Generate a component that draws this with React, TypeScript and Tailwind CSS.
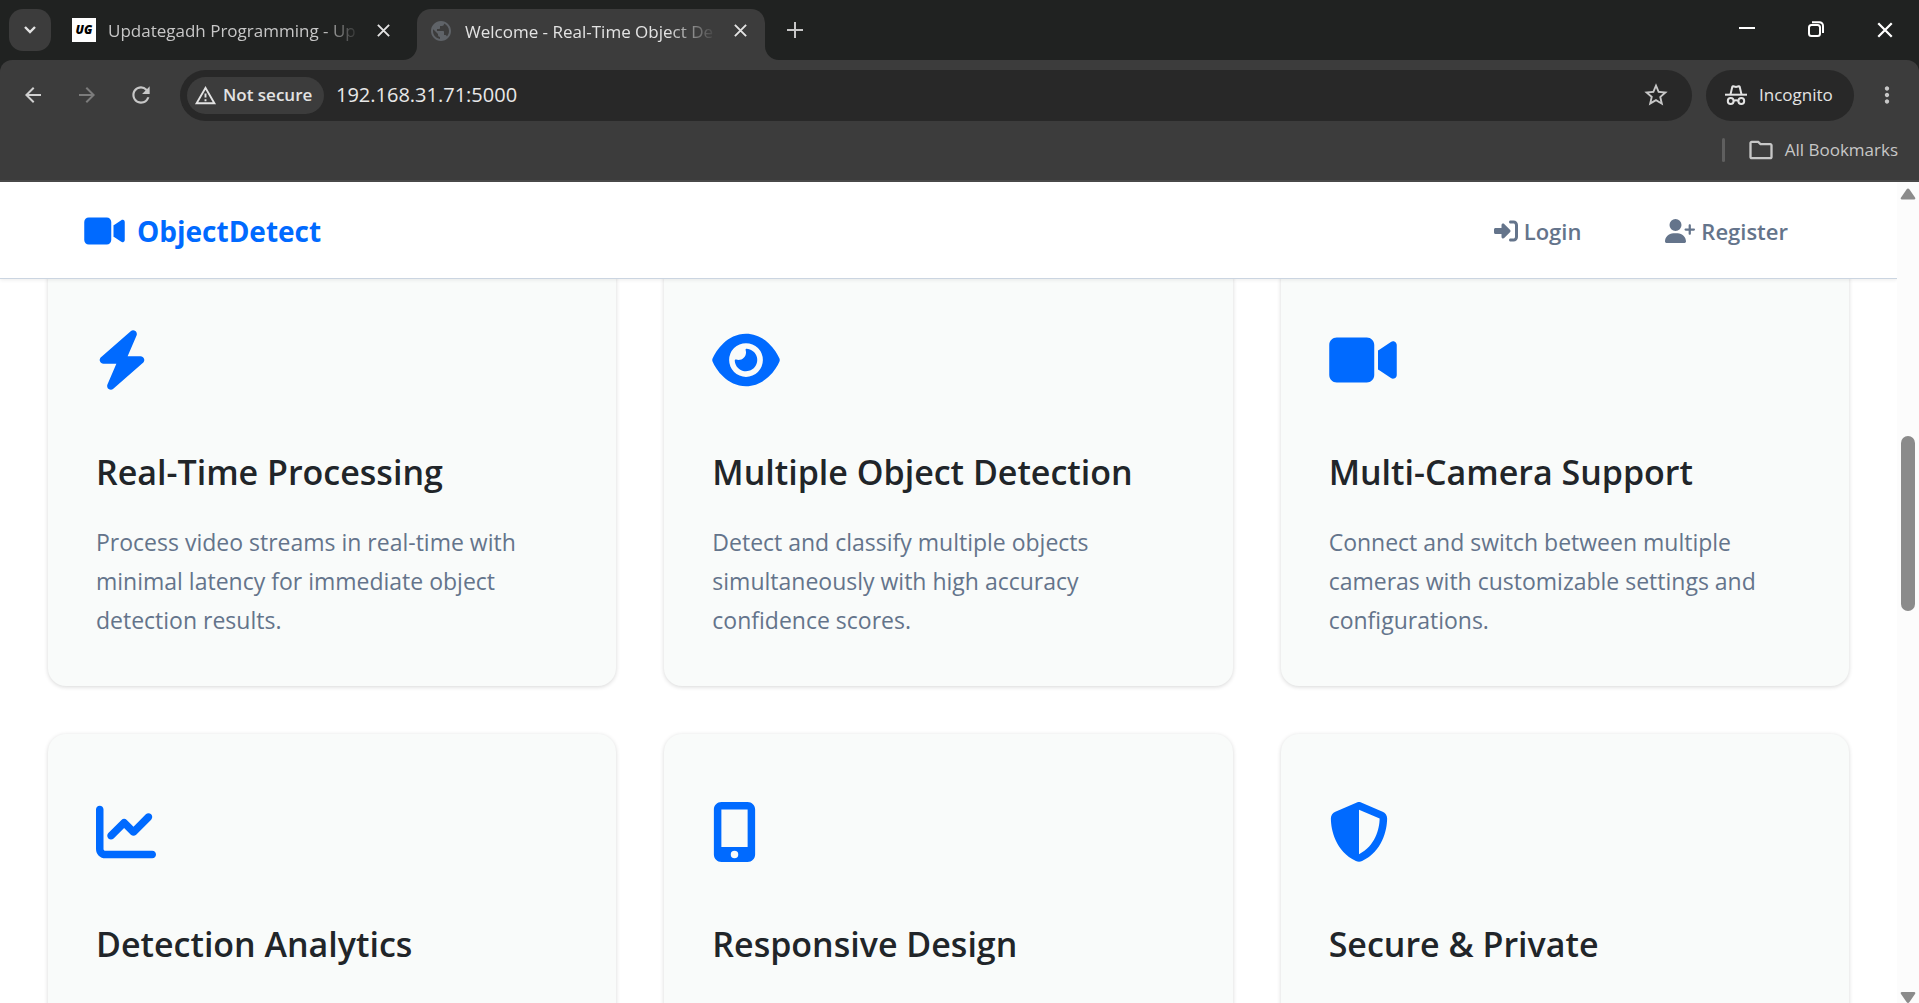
import { FaBolt, FaChartLine, FaEye, FaMobileScreenButton, FaRightToBracket, FaShieldHalved, FaUserPlus, FaVideo } from "react-icons/fa6";
import { MdArrowBack, MdArrowForward, MdMoreVert, MdOutlineFolder, MdOutlineWarningAmber, MdPublic, MdRefresh, MdStarBorder } from "react-icons/md";
import type { IconType } from "react-icons";

type Feature = { icon: IconType; iconWidth: string; title: string; text?: string };

const features: Feature[] = [
  { icon: FaBolt, iconWidth: "w-[52px]", title: "Real-Time Processing", text: "Process video streams in real-time with minimal latency for immediate object detection results." },
  { icon: FaEye, iconWidth: "w-[68px]", title: "Multiple Object Detection", text: "Detect and classify multiple objects simultaneously with high accuracy confidence scores." },
  { icon: FaVideo, iconWidth: "w-[68px]", title: "Multi-Camera Support", text: "Connect and switch between multiple cameras with customizable settings and configurations." },
  { icon: FaChartLine, iconWidth: "w-[60px]", title: "Detection Analytics" },
  { icon: FaMobileScreenButton, iconWidth: "w-[45px]", title: "Responsive Design" },
  { icon: FaShieldHalved, iconWidth: "w-[60px]", title: "Secure & Private" },
];

function CrossIcon({ className }: { className: string }) {
  return (
    <svg viewBox="0 0 16 16" className={className} fill="none" stroke="currentColor" aria-hidden="true">
      <path d="M2 2l12 12M14 2L2 14" />
    </svg>
  );
}

function IncognitoIcon() {
  return (
    <svg viewBox="0 0 22 20" className="h-5 w-[22px]" fill="none" stroke="currentColor" strokeWidth="2" aria-hidden="true">
      <path d="M0 9.700h22" />
      <path d="M5.500 9.500L7.300 1.800Q7.500 1 8.200 1.200L11 2l2.800-.8Q14.500 1 14.700 1.800L16.500 9.500" />
      <circle cx="5.700" cy="16" r="2.900" />
      <circle cx="16.300" cy="16" r="2.900" />
      <path d="M8.400 15.800Q11 14.800 13.600 15.800" />
    </svg>
  );
}

function TabStrip() {
  return (
    <div className="flex h-15 items-center bg-[#202221] pl-[9px] text-[#c7c7c7]">
      <button aria-label="Search tabs" className="flex size-[42px] shrink-0 items-center justify-center rounded-[14px] bg-[#3c3c3c] text-[#e3e3e3]">
        <svg viewBox="0 0 12 8" className="h-2 w-3" fill="none" stroke="currentColor" strokeWidth="2.400" aria-hidden="true">
          <path d="M1 1l5 5 5-5" />
        </svg>
      </button>
      <div className="flex w-[366px] shrink-0 items-center pl-[21px]">
        <span className="flex size-6 shrink-0 items-center justify-center bg-white text-[12px] leading-none font-extrabold text-black italic">UG</span>
        <span className="ml-3 w-[252px] mask-r-from-85% pt-0.5 text-[17px] leading-6 whitespace-nowrap">Updategadh Programming - Up</span>
        <button aria-label="Close tab Updategadh" className="ml-4 text-[#e3e3e3]">
          <CrossIcon className="size-[15px] stroke-2" />
        </button>
      </div>
      <div className="relative flex h-[51px] w-[348px] shrink-0 items-center self-end rounded-t-[14px] bg-[#3c3c3c] pb-2 pl-3 text-[#e3e3e3]">
        <svg viewBox="0 0 14 14" className="absolute bottom-0 -left-[14px] size-[14px] fill-[#3c3c3c]" aria-hidden="true">
          <path d="M14 0v14H0A14 14 0 0 0 14 0z" />
        </svg>
        <svg viewBox="0 0 14 14" className="absolute -right-[14px] bottom-0 size-[14px] fill-[#3c3c3c]" aria-hidden="true">
          <path d="M0 0v14h14A14 14 0 0 1 0 0z" />
        </svg>
        <MdPublic className="size-6 shrink-0 text-[#5f6368]" />
        <span className="ml-3 w-[252px] mask-r-from-80% pt-0.5 text-[17px] leading-6 whitespace-nowrap">Welcome - Real-Time Object De</span>
        <button aria-label="Close tab Welcome" className="ml-4">
          <CrossIcon className="size-[15px] stroke-2" />
        </button>
      </div>
      <button aria-label="New tab" className="ml-[22px]">
        <svg viewBox="0 0 16 16" className="size-4" fill="none" stroke="currentColor" strokeWidth="2" aria-hidden="true">
          <path d="M8 0v16M0 8h16" />
        </svg>
      </button>
      <div className="ml-auto flex text-white">
        <button aria-label="Minimize" className="flex w-[69px] justify-center">
          <svg viewBox="0 0 16 16" className="size-4" fill="none" stroke="currentColor" strokeWidth="2" aria-hidden="true">
            <path d="M0 7h16" />
          </svg>
        </button>
        <button aria-label="Restore" className="flex w-[69px] justify-center">
          <svg viewBox="0 0 16 16" className="size-4" fill="none" stroke="currentColor" strokeWidth="2" aria-hidden="true">
            <rect x="1" y="4" width="11" height="11" rx="2.500" />
            <path d="M4 1.200h7.500a3.500 3.500 0 0 1 3.500 3.500V12" />
          </svg>
        </button>
        <button aria-label="Close window" className="flex w-[69px] justify-center">
          <CrossIcon className="size-[18px] stroke-2" />
        </button>
      </div>
    </div>
  );
}

function Toolbar() {
  return (
    <div className="bg-[#202221]">
      <div className="rounded-t-xl border-b-2 border-[#484848] bg-[#3c3c3c] pb-2.5 text-[#c7c7c7]">
        <div className="flex h-[70px] items-center pl-[21px]">
          <button aria-label="Back"><MdArrowBack className="size-6 text-[#d0d0d0]" /></button>
          <button aria-label="Forward" className="ml-[30px]"><MdArrowForward className="size-6 text-[#7c7c7c]" /></button>
          <button aria-label="Reload" className="ml-[29px]"><MdRefresh className="size-[26px]" /></button>
          <div className="ml-[26px] flex h-[51px] flex-1 items-center rounded-full bg-[#282828] pr-[22px] pl-[7px]">
            <button className="flex h-[37px] w-[137px] shrink-0 items-center gap-1.5 rounded-full bg-[#3c3c3c] pl-[7px] text-[17px] font-semibold whitespace-nowrap text-[#e3e3e3]">
              <MdOutlineWarningAmber className="size-[23px]" />
              Not secure
            </button>
            <input aria-label="Address" defaultValue="192.168.31.71:5000" className="ml-3 min-w-0 flex-1 bg-transparent text-[20px] text-[#e8e8e8] outline-none" />
            <button aria-label="Bookmark this page"><MdStarBorder className="size-7" /></button>
          </div>
          <button className="ml-[14px] flex h-[51px] w-[148px] items-center gap-3 rounded-full bg-[#282828] pl-[19px] text-[17px] text-[#e3e3e3]">
            <IncognitoIcon />
            Incognito
          </button>
          <button aria-label="Menu" className="mr-[19px] ml-5"><MdMoreVert className="size-[26px]" /></button>
        </div>
        <div className="flex h-10 items-center justify-end pr-[21px]">
          <span className="h-6 w-[3px] rounded-full bg-[#5f5f5f]" />
          <button className="ml-[22px] flex items-center gap-2.5 text-[17px] leading-6">
            <MdOutlineFolder className="size-[28px]" />
            All Bookmarks
          </button>
        </div>
      </div>
    </div>
  );
}

function SiteHeader() {
  return (
    <header className="relative z-10 flex h-[97px] items-center border-b border-[#cbd5e1] bg-white pt-0.5 pr-[109px] pl-[84px] shadow-[0_1px_4px_rgba(0,0,0,0.08)]">
      <a href="#home" className="flex items-center gap-3 text-[28px] leading-10 font-bold text-[#006aff]">
        <FaVideo className="h-9 w-[41px]" />
        ObjectDetect
      </a>
      <nav className="ml-auto flex items-center gap-[84px] text-[22px] leading-8 font-semibold text-[#64748b]">
        <a href="#login" className="flex items-center gap-1.5">
          <FaRightToBracket className="size-6" />
          Login
        </a>
        <a href="#register" className="flex items-center gap-1.5">
          <FaUserPlus className="h-6 w-[30px]" />
          Register
        </a>
      </nav>
    </header>
  );
}

function FeatureCard({ icon: Icon, iconWidth, title, text }: Feature) {
  return (
    <article className="rounded-[18px] bg-[#f9fbfa] px-12 pt-12 pb-[46px] shadow-[0_1px_4px_rgba(0,0,0,0.16)]">
      <Icon className={`my-5 h-[60px] text-[#006aff] ${iconWidth}`} />
      <h3 className="mt-[60px] text-[34px] leading-[44px] font-semibold whitespace-nowrap text-[#212529]">{title}</h3>
      {text && <p className="mt-[29px] text-[23px] leading-[39px] text-[#64748b]">{text}</p>}
    </article>
  );
}

function Scrollbar() {
  return (
    <div className="flex w-[22px] shrink-0 flex-col items-center bg-[#fcfcfc] pt-[6px]">
      <svg viewBox="0 0 16 12" className="h-3 w-4 fill-[#8b8b8b]" aria-hidden="true">
        <path d="M6.500 1.500Q8-.5 9.500 1.500l5.500 8q1 2-1 2H2q-2 0-1-2z" />
      </svg>
      <span className="grow-[236]" />
      <span className="w-[14px] grow-[175] rounded-full bg-[#8b8b8b]" />
      <span className="grow-[381]" />
      <svg viewBox="0 0 16 11" className="h-[11px] w-4 fill-[#8b8b8b]" aria-hidden="true">
        <path d="M2 0h12q2 0 1 2l-5.500 8q-1.500 2-3 0L1 2Q0 0 2 0z" />
      </svg>
    </div>
  );
}

export default function App() {
  return (
    <div className="flex h-screen flex-col overflow-hidden bg-white font-['Open_Sans',sans-serif]">
      <TabStrip />
      <Toolbar />
      <div className="flex min-h-0 flex-1">
        <div className="min-w-0 flex-1 overflow-hidden">
          <SiteHeader />
          <main className="-mt-[17px] grid auto-rows-fr grid-cols-3 gap-12 px-12">
            {features.map((f) => (
              <FeatureCard key={f.title} {...f} />
            ))}
          </main>
        </div>
        <Scrollbar />
      </div>
    </div>
  );
}
